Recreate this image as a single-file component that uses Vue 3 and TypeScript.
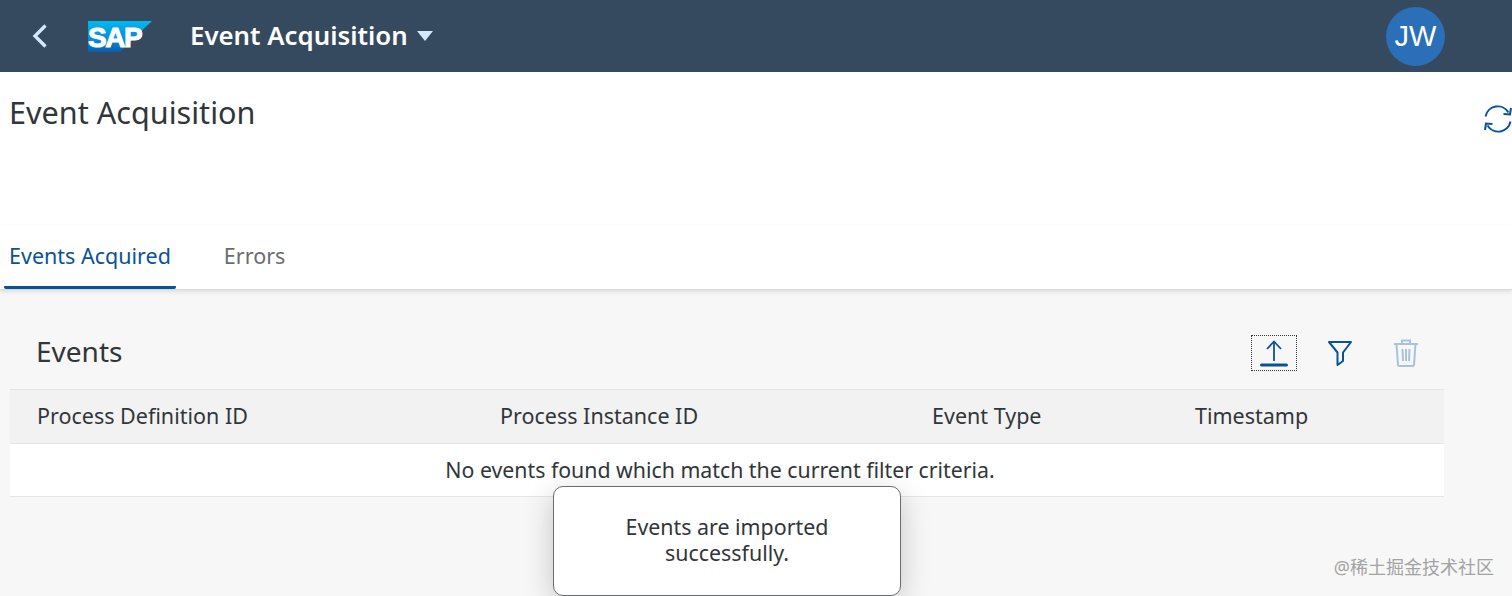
<template>
  <div class="page">
    <header class="shell">
      <svg class="back" viewBox="0 0 16 26" width="16" height="26">
        <path d="M13.5 2.5 L3 13 L13.5 23.5" fill="none" stroke="#d1e8ff" stroke-width="3.4" />
      </svg>
      <div class="logo">
        <svg viewBox="0 0 64 31" width="64" height="31">
          <defs>
            <linearGradient id="sapBlue" x1="0" y1="0" x2="0" y2="1">
              <stop offset="0" stop-color="#00b8f1" />
              <stop offset="0.6" stop-color="#0a8ad6" />
              <stop offset="1" stop-color="#0a5ead" />
            </linearGradient>
          </defs>
          <polygon points="0,0 64,0 32,31 0,31" fill="url(#sapBlue)" />
        </svg>
        <span class="logo-text">SAP</span>
      </div>
      <div class="app-title">Event Acquisition</div>
      <svg class="caret" viewBox="0 0 16 10" width="16" height="10">
        <polygon points="0,0 16,0 8,10" fill="#d1e8ff" />
      </svg>
      <div class="avatar">JW</div>
    </header>

    <section class="title-area">
      <h1>Event Acquisition</h1>
      <svg class="refresh" viewBox="0 0 28 28" width="28" height="28">
        <g fill="none" stroke="#0a5296" stroke-width="2">
          <path d="M1.5 11.5 A12.5 12.5 0 0 1 24.5 7.5" />
          <path d="M26.5 16.5 A12.5 12.5 0 0 1 3.5 20.5" />
          <path d="M19.5 9 L26 9.5 L27 3" />
          <path d="M8.5 19 L2 18.5 L1 25" />
        </g>
      </svg>
    </section>

    <nav class="tabs">
      <div
        v-for="tab in tabs"
        :key="tab"
        class="tab"
        :class="{ active: tab === activeTab }"
      >
        {{ tab }}
      </div>
    </nav>

    <main class="content">
      <div class="toolbar">
        <h2>Events</h2>
        <div class="actions">
          <button class="action focused">
            <svg viewBox="0 0 28 30" width="28" height="30">
              <g fill="none" stroke="#0a5296">
                <path d="M14 3.5 V23" stroke-width="1.8" />
                <path d="M7 11 L14 3.5 L21 11" stroke-width="1.8" />
                <path d="M1.5 27 H26.5" stroke-width="3" stroke-linecap="round" />
              </g>
            </svg>
          </button>
          <button class="action">
            <svg viewBox="0 0 26 26" width="26" height="26">
              <path
                d="M2 2 H24 L16 12.5 V21 L10.5 25 V12.5 Z"
                fill="none"
                stroke="#0a5296"
                stroke-width="2"
                stroke-linejoin="round"
              />
            </svg>
          </button>
          <button class="action">
            <svg viewBox="0 0 26 30" width="26" height="30">
              <g fill="none" stroke="#a9c3de" stroke-width="2">
                <path d="M1 6 H25" />
                <path d="M9 5 V2.5 H17 V5" />
                <path d="M3.5 6 L5 27 Q5 28 6.5 28 H19.5 Q21 28 21 27 L22.5 6" />
                <path d="M9.5 11 L10 23 M13 11 V23 M16.5 11 L16 23" />
              </g>
            </svg>
          </button>
        </div>
      </div>

      <div class="table">
        <div class="table-head">
          <div v-for="col in columns" :key="col">{{ col }}</div>
        </div>
        <div class="table-empty">No events found which match the current filter criteria.</div>
      </div>
    </main>

    <div class="toast">Events are imported successfully.</div>
    <div class="watermark">@稀土掘金技术社区</div>
  </div>
</template>

<script setup lang="ts">
const tabs: string[] = ['Events Acquired', 'Errors'];
const activeTab = 'Events Acquired';
const columns: string[] = ['Process Definition ID', 'Process Instance ID', 'Event Type', 'Timestamp'];
</script>

<style>
html,
body {
  margin: 0;
  overflow: hidden;
}
</style>

<style scoped>
.page {
  position: relative;
  width: 1512px;
  height: 596px;
  overflow: hidden;
  display: flex;
  flex-direction: column;
  background: #fff;
  color: #32363a;
  font-family: 'Noto Sans', 'Noto Sans CJK SC', sans-serif;
}

.shell {
  flex: none;
  height: 72px;
  box-sizing: border-box;
  display: flex;
  align-items: center;
  padding-left: 32px;
  background: #354a5f;
}

.back {
  margin-right: 40px;
}

.logo {
  position: relative;
  width: 64px;
  height: 31px;
  margin-right: 38px;
}

.logo svg {
  display: block;
}

.logo-text {
  position: absolute;
  left: 0;
  top: 1px;
  font-family: 'Liberation Sans', sans-serif;
  font-size: 28px;
  font-weight: 700;
  line-height: 31px;
  letter-spacing: -1.5px;
  color: #fff;
  -webkit-text-stroke: 1px #fff;
}

.app-title {
  font-size: 25.8px;
  font-weight: 600;
  line-height: 34px;
  margin-top: -2px;
  color: #fff;
}

.caret {
  margin-left: 9px;
  margin-top: 0;
}

.avatar {
  width: 59px;
  height: 59px;
  margin-left: auto;
  margin-right: 67px;
  border-radius: 50%;
  background: #2a6fb8;
  color: #fff;
  font-family: 'Liberation Sans', sans-serif;
  font-size: 29px;
  line-height: 59px;
  text-align: center;
}

.title-area {
  flex: none;
  height: 153px;
  box-sizing: border-box;
  padding: 18px 10px 0 9px;
  display: flex;
  justify-content: space-between;
}

.title-area h1 {
  margin: 0;
  font-size: 30.6px;
  font-weight: 400;
  line-height: 44px;
}

.refresh {
  margin: 15px -10px 0 0;
}

.tabs {
  flex: none;
  height: 65px;
  box-sizing: border-box;
  display: flex;
  padding-left: 4px;
  border-bottom: 1px solid #d9d9d9;
  box-shadow: 0 2px 4px rgba(0, 0, 0, 0.1);
  position: relative;
}

.tab {
  margin-right: 43px;
  padding: 0 5px;
  font-size: 21.5px;
  line-height: 62px;
  color: #6a6d70;
}

.tab.active {
  color: #0a5296;
  border-bottom: 3px solid #0a5296;
  border-radius: 0 0 2px 2px;
  height: 61px;
}

.content {
  flex: 1;
  padding: 0 68px 0 10px;
  background: #f7f7f7;
}

.toolbar {
  height: 99px;
  box-sizing: border-box;
  padding: 26px 15px 0 26px;
  display: flex;
  align-items: center;
  justify-content: space-between;
}

.toolbar h2 {
  margin: -4px 0 0;
  font-size: 28px;
  font-weight: 400;
}

.actions {
  display: flex;
  align-items: center;
  gap: 20px;
}

.action {
  width: 46px;
  height: 36px;
  padding: 0;
  display: flex;
  align-items: center;
  justify-content: center;
  background: none;
  border: 1px solid transparent;
}

.action.focused {
  border: 1px dotted #32363a;
}

.table {
  font-size: 21.5px;
}

.table-head {
  height: 55px;
  box-sizing: border-box;
  display: grid;
  grid-template-columns: 463px 432px 263px 1fr;
  align-items: center;
  padding: 0 0 3px 27px;
  background: #f2f2f2;
  border-top: 1px solid #e5e5e5;
  border-bottom: 1px solid #e5e5e5;
}

.table-empty {
  height: 53px;
  box-sizing: border-box;
  padding-right: 14px;
  font-size: 21.3px;
  line-height: 52px;
  text-align: center;
  background: #fff;
  border-bottom: 1px solid #e5e5e5;
}

.toast {
  position: absolute;
  left: 553px;
  top: 486px;
  width: 348px;
  height: 110px;
  box-sizing: border-box;
  padding: 27px 60px 0;
  background: #fff;
  border: 1px solid #6a6d70;
  border-radius: 10px;
  box-shadow: 0 8px 30px rgba(0, 0, 0, 0.2);
  font-size: 21.4px;
  line-height: 26px;
  text-align: center;
}

.watermark {
  position: absolute;
  right: 18px;
  bottom: 17px;
  font-size: 18px;
  line-height: 24px;
  color: #a3a3a3;
}
</style>
